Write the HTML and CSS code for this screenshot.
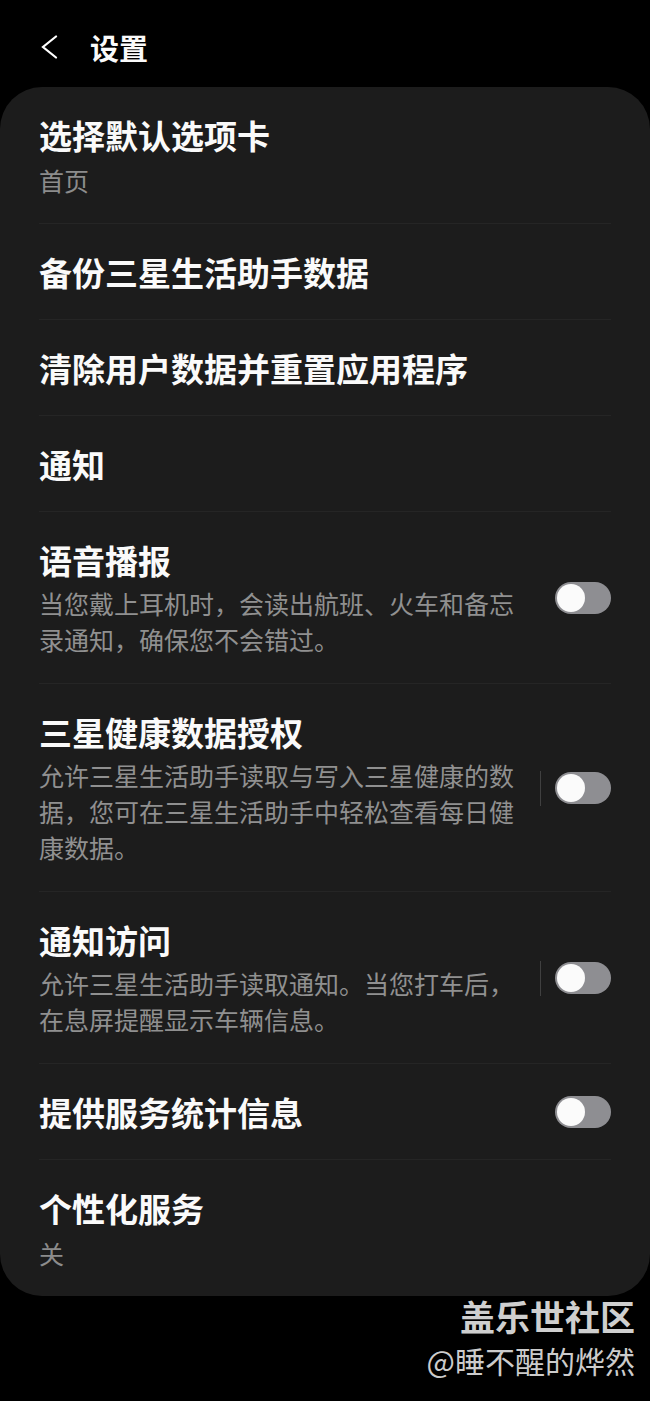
FILE: index.html
```html
<!DOCTYPE html>
<html lang="zh-CN">

<head>
    <meta charset="UTF-8">
    <meta name="viewport" content="width=device-width, initial-scale=1.0">
    <title>设置</title>
    <link rel="stylesheet" href="styles.css">
</head>

<body>
    <div class="header">
        <span class="back">
            <svg width="18" height="24" viewBox="0 0 18 24">
                <polyline points="16,1.5 3,12 16,22.5" fill="none" stroke="#fff" stroke-width="2.2"
                    stroke-linejoin="miter" stroke-linecap="round" />
            </svg>
        </span>
        <h1>设置</h1>
    </div>

    <div class="card">
        <div class="row">
            <div class="text">
                <div class="title">选择默认选项卡</div>
                <div class="sub">首页</div>
            </div>
        </div>
        <div class="row">
            <div class="text">
                <div class="title">备份三星生活助手数据</div>
            </div>
        </div>
        <div class="row">
            <div class="text">
                <div class="title">清除用户数据并重置应用程序</div>
            </div>
        </div>
        <div class="row">
            <div class="text">
                <div class="title">通知</div>
            </div>
        </div>
        <div class="row">
            <div class="text">
                <div class="title">语音播报</div>
                <div class="desc">当您戴上耳机时，会读出航班、火车和备忘录通知，确保您不会错过。</div>
            </div>
            <div class="side">
                <span class="switch"></span>
            </div>
        </div>
        <div class="row">
            <div class="text">
                <div class="title">三星健康数据授权</div>
                <div class="desc">允许三星生活助手读取与写入三星健康的数据，您可在三星生活助手中轻松查看每日健康数据。</div>
            </div>
            <div class="side">
                <span class="line"></span>
                <span class="switch"></span>
            </div>
        </div>
        <div class="row">
            <div class="text">
                <div class="title">通知访问</div>
                <div class="desc">允许三星生活助手读取通知。当您打车后，在息屏提醒显示车辆信息。</div>
            </div>
            <div class="side">
                <span class="line"></span>
                <span class="switch"></span>
            </div>
        </div>
        <div class="row">
            <div class="text">
                <div class="title">提供服务统计信息</div>
            </div>
            <div class="side">
                <span class="switch"></span>
            </div>
        </div>
        <div class="row">
            <div class="text">
                <div class="title">个性化服务</div>
                <div class="sub">关</div>
            </div>
        </div>
    </div>

    <div class="mark">
        <p class="mark-name">盖乐世社区</p>
        <p class="mark-user">@睡不醒的烨然</p>
    </div>
</body>

</html>
```

FILE: styles.css
```css
* {
    margin: 0;
    padding: 0;
}

body {
    background-color: #000;
    font-family: "Noto Sans CJK SC", "Noto Sans", sans-serif;
    color: #fafafa;
}

.header {
    height: 87px;
    display: flex;
    align-items: center;
    box-sizing: border-box;
    padding: 6px 0 0 40px;
}

.back {
    width: 18px;
    height: 24px;
    display: flex;
}

.header h1 {
    margin-left: 32px;
    font-size: 29px;
    font-weight: 700;
    line-height: 40px;
}

.card {
    background-color: #1c1c1c;
    border-radius: 42px;
}

.row {
    margin: 0 39px;
    padding: 27px 0 26px;
    display: flex;
    align-items: center;
    border-bottom: 1px solid #252525;
}

.row:last-child {
    border-bottom: none;
}

.text {
    width: 490px;
}

.title {
    font-size: 33px;
    font-weight: 700;
    line-height: 42px;
}

.sub {
    margin-top: 7px;
    font-size: 25px;
    line-height: 34px;
    color: #8c8c8c;
}

.desc {
    margin-top: 4px;
    font-size: 25px;
    line-height: 36px;
    color: #909090;
}

.side {
    flex: 1;
    display: flex;
    align-items: center;
    justify-content: flex-end;
}

.line {
    width: 1px;
    height: 35px;
    background-color: #404040;
    margin-right: 14px;
}

.switch {
    width: 56px;
    height: 32px;
    border-radius: 16px;
    background-color: #8e8e92;
    position: relative;
}

.switch::after {
    content: "";
    position: absolute;
    left: 2px;
    top: 2px;
    width: 28px;
    height: 28px;
    border-radius: 50%;
    background-color: #fbfbfb;
}

.mark {
    text-align: right;
    padding-right: 15px;
}

.mark-name {
    font-size: 35px;
    font-weight: 700;
    line-height: 40px;
    color: #cfcfcf;
}

.mark-user {
    margin-top: 4px;
    font-size: 30px;
    line-height: 40px;
    color: #cccccc;
}
```
